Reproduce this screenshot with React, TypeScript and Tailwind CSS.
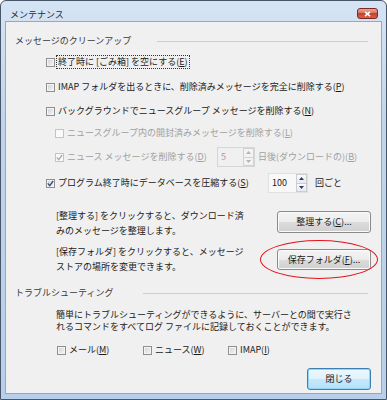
import React from "react";

function Cb({ checked = false, disabled = false }: { checked?: boolean; disabled?: boolean }) {
  return (
    <span
      className={
        disabled
          ? "w-[9px] h-[9px] shrink-0 border border-[#c4c4c4] bg-[#fafafa] flex items-center justify-center"
          : "w-[9px] h-[9px] shrink-0 border border-[#8e8f8f] bg-[linear-gradient(135deg,#cfd2d5,#f6f6f6)] shadow-[inset_0_0_0_1px_#f4f4f4] flex items-center justify-center"
      }
    >
      {checked && (
        <svg width="7" height="7" viewBox="0 0 7 7">
          <path
            d="M0.8 3.4 L2.7 5.6 L6.2 1"
            fill="none"
            stroke={disabled ? "#a9a9a9" : "#35497a"}
            strokeWidth="1.3"
          />
        </svg>
      )}
    </span>
  );
}

function Spin({ value, disabled = false, wide = false }: { value: string; disabled?: boolean; wide?: boolean }) {
  const arrow = disabled ? "#b4b4b4" : "#2c3e64";
  return (
    <div
      className={
        (wide ? "w-[40px] " : "w-[38px] ") +
        (disabled
          ? "h-[20px] flex border border-[#d6d6d6] bg-[#f0f0f0]"
          : "h-[20px] flex border border-[#e0e0e0] bg-[#f8f8f8]")
      }
    >
      <div className={disabled ? "flex-1 pl-[3px] leading-[18px] text-[#a0a0a0]" : "flex-1 pl-[3px] leading-[18px] text-[#1a1a1a]"}>
        {value}
      </div>
      <div className="w-[11px] flex flex-col">
        <div className={disabled ? "flex-1 border border-[#d2d2d2] bg-[#f3f3f3] flex items-center justify-center" : "flex-1 border border-[#c9ccd2] bg-[linear-gradient(#fbfbfb,#e6e9ee)] flex items-center justify-center"}>
          <svg width="5" height="3" viewBox="0 0 5 3">
            <path d="M0 3 L2.5 0 L5 3 Z" fill={arrow} />
          </svg>
        </div>
        <div className={disabled ? "flex-1 border border-t-0 border-[#d2d2d2] bg-[#f3f3f3] flex items-center justify-center" : "flex-1 border border-t-0 border-[#c9ccd2] bg-[linear-gradient(#fbfbfb,#e6e9ee)] flex items-center justify-center"}>
          <svg width="5" height="3" viewBox="0 0 5 3">
            <path d="M0 0 L2.5 3 L5 0 Z" fill={arrow} />
          </svg>
        </div>
      </div>
    </div>
  );
}

function Btn({ children, cls }: { children: React.ReactNode; cls: string }) {
  return (
    <div
      className={
        "rounded-[3px] border border-[#8a8a8a] bg-[linear-gradient(#f4f4f4_0%,#ececec_50%,#dcdcdc_50%,#d0d0d0_100%)] shadow-[inset_0_0_0_1px_#fbfbfb] flex items-center justify-center text-[#1a1a1a] " +
        cls
      }
    >
      {children}
    </div>
  );
}

export default function App() {
  return (
    <div className="w-[387px] h-[400px] relative overflow-hidden rounded-t-[6px] border border-[#48566a] bg-[linear-gradient(#d5e4f4,#c0d5ec_30%,#b7cfea)] font-['Noto_Sans_CJK_JP','Noto_Sans',sans-serif] text-[9px]">
      {/* title bar */}
      <div className="h-[21px] flex items-start justify-between">
        <div className="ml-[9px] mt-[7px] leading-[14px] text-[#1f2a38]">メンテナンス</div>
        <div className="mt-[7px] mr-[8px] w-[21px] h-[11px] rounded-[3px] border border-[#7a2a20] bg-[linear-gradient(#eaa396,#d5705e_50%,#c2412c_50%,#d8614a)] flex items-center justify-center">
          <svg width="7" height="6" viewBox="0 0 7 6">
            <path d="M1 0.8 L6 5.2 M6 0.8 L1 5.2" stroke="#ffffff" strokeWidth="1.6" />
          </svg>
        </div>
      </div>

      {/* client area */}
      <div className="ml-[5px] w-[375px] h-[371px] bg-[#f0f0f0] relative shadow-[0_0_0_1px_#8fa9c9] flex flex-col text-[#1a1a1a]">
        {/* heading 1 */}
        <div className="mt-[12px] h-[14px] flex items-center">
          <span className="ml-[9px] w-[142px] leading-[14px] text-[#3a3a3a]">メッセージのクリーンアップ</span>
          <span className="flex-1 mr-[13px] h-px bg-[#c9ced4]" />
        </div>

        {/* row 1 */}
        <div className="mt-[6px] h-[16px] flex items-center pl-[40px]">
          <Cb />
          <span className="ml-[1px] border border-dotted border-[#333] pl-[1px] pr-[1px] leading-[12px]">
            終了時に [ごみ箱] を空にする(<u>E</u>)
          </span>
        </div>

        {/* row 2 */}
        <div className="mt-[9px] h-[16px] flex items-center pl-[40px]">
          <Cb />
          <span className="ml-[3px]">
            IMAP フォルダを出るときに、削除済みメッセージを完全に削除する(<u>P</u>)
          </span>
        </div>

        {/* row 3 */}
        <div className="mt-[8px] h-[16px] flex items-center pl-[40px]">
          <Cb />
          <span className="ml-[3px]">
            バックグラウンドでニュースグループ メッセージを削除する(<u>N</u>)
          </span>
        </div>

        {/* row 4 */}
        <div className="mt-[6px] h-[16px] flex items-center pl-[49px] text-[#a0a0a0]">
          <Cb disabled />
          <span className="ml-[3px]">
            ニュースグループ内の開封済みメッセージを削除する(<u>L</u>)
          </span>
        </div>

        {/* row 5 */}
        <div className="mt-[6px] h-[20px] flex items-center pl-[49px] text-[#a0a0a0]">
          <Cb disabled checked />
          <span className="ml-[3px] w-[150px]">
            ニュース メッセージを削除する(<u>D</u>)
          </span>
          <Spin value="5" disabled />
          <span className="ml-[3px]">
            日後(ダウンロードの)(<u>B</u>)
          </span>
        </div>

        {/* row 6 */}
        <div className="mt-[6px] h-[20px] flex items-center pl-[40px]">
          <Cb checked />
          <span className="ml-[3px] w-[210px]">
            プログラム終了時にデータベースを圧縮する(<u>S</u>)
          </span>
          <Spin value="100" wide />
          <span className="ml-[7px]">回ごと</span>
        </div>

        {/* section 1 */}
        <div className="mt-[15px] h-[30px] flex items-start">
          <div className="ml-[50px] w-[221px] leading-[15px]">
            [整理する] をクリックすると、ダウンロード済
            <br />
            みのメッセージを整理します。
          </div>
          <Btn cls="mt-[3px] w-[94px] h-[22px]">
            整理する(<u>C</u>)...
          </Btn>
        </div>

        {/* section 2 */}
        <div className="mt-[6px] h-[30px] flex items-start">
          <div className="ml-[50px] w-[221px] leading-[15px]">
            [保存フォルダ] をクリックすると、メッセージ
            <br />
            ストアの場所を変更できます。
          </div>
          <Btn cls="mt-[5px] w-[94px] h-[21px]">
            保存フォルダ(<u>F</u>)...
          </Btn>
        </div>

        {/* heading 2 */}
        <div className="mt-[12px] h-[14px] flex items-center">
          <span className="ml-[9px] w-[128px] leading-[14px] text-[#3a3a3a]">トラブルシューティング</span>
          <span className="flex-1 mr-[13px] h-px bg-[#c9ced4]" />
        </div>

        {/* troubleshooting text */}
        <div className="mt-[9px] ml-[50px] leading-[12px] h-[24px]">
          簡単にトラブルシューティングができるように、サーバーとの間で実行さ
          <br />
          れるコマンドをすべてログ ファイルに記録しておくことができます。
        </div>

        {/* log checkboxes */}
        <div className="mt-[9px] h-[16px] flex items-center pl-[51px]">
          <div className="w-[86px] flex items-center">
            <Cb />
            <span className="ml-[3px]">
              メール(<u>M</u>)
            </span>
          </div>
          <div className="w-[85px] flex items-center">
            <Cb />
            <span className="ml-[3px]">
              ニュース(<u>W</u>)
            </span>
          </div>
          <div className="flex items-center">
            <Cb />
            <span className="ml-[3px]">
              IMAP(<u>I</u>)
            </span>
          </div>
        </div>

        {/* close button */}
        <div className="mt-[10px] ml-[301px] w-[64px] h-[22px] rounded-[3px] border border-[#3c7fb1] bg-[linear-gradient(#eef8fe_0%,#dff2fc_50%,#c6e9fd_50%,#b4e0f8_100%)] shadow-[inset_0_0_0_1px_#8fd6f7] flex items-center justify-center text-[#1a1a1a]">
          閉じる
        </div>

        {/* red annotation ellipse */}
        <div className="absolute left-[254px] top-[218px] w-[118px] h-[39px] rounded-[50%] border-[1.5px] border-[#e5141c]" />
      </div>
    </div>
  );
}
